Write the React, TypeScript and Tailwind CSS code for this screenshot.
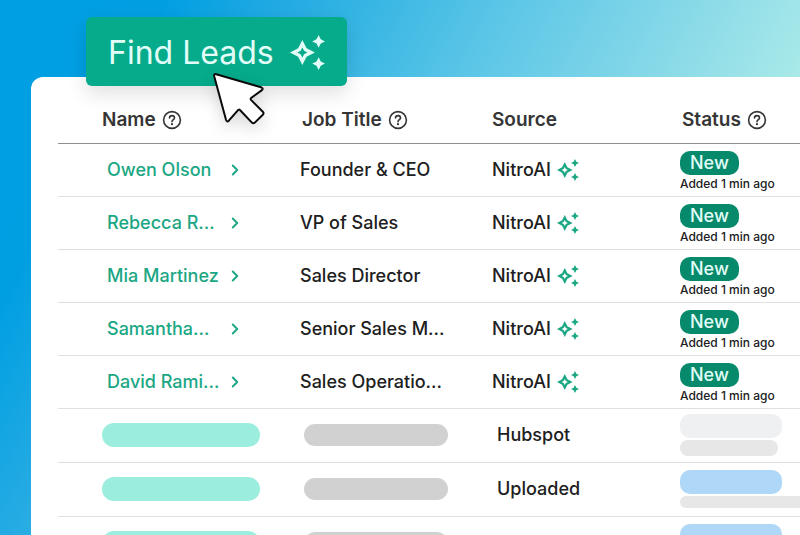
import { ChevronRight } from 'lucide-react'

interface Lead {
  name: string
  title: string
}

interface PendingLead {
  source: string
  pill: string
  note: string
}

const leads: Lead[] = [
  { name: 'Owen Olson', title: 'Founder & CEO' },
  { name: 'Rebecca R...', title: 'VP of Sales' },
  { name: 'Mia Martinez', title: 'Sales Director' },
  { name: 'Samantha...', title: 'Senior Sales M...' },
  { name: 'David Rami...', title: 'Sales Operatio...' },
]

const pending: PendingLead[] = [
  { source: 'Hubspot', pill: 'bg-[#eff0f2]', note: 'w-[98px] h-4' },
  { source: 'Uploaded', pill: 'bg-[#afd7f8]', note: 'w-full rounded-r-none h-3' },
  { source: '', pill: 'bg-[#afd7f8]', note: 'w-full rounded-r-none h-3' },
]

function Sparkles({ className }: { className: string }) {
  return (
    <svg className={className} viewBox="0 0 34 34" fill="currentColor" aria-hidden="true">
      <path
        fillRule="evenodd"
        d="M12 4.8L16.1 12.9L24.2 17L16.1 21.1L12 29.2L7.9 21.1L-0.2 17L7.9 12.9ZM12 12.2L10.3 15.3L7.2 17L10.3 18.7L12 21.8L13.7 18.7L16.8 17L13.7 15.3Z"
      />
      <path d="M27.8 0L29.9 4.1L34 6.2L29.9 8.3L27.8 12.4L25.7 8.3L21.6 6.2L25.7 4.1Z" />
      <path d="M27.8 21.6L29.9 25.7L34 27.8L29.9 29.9L27.8 34L25.7 29.9L21.6 27.8L25.7 25.7Z" />
    </svg>
  )
}

function HelpIcon() {
  return (
    <svg className="w-5 h-5" viewBox="0 0 20 20" fill="none" stroke="currentColor" strokeWidth={1.6} strokeLinecap="round" aria-hidden="true">
      <circle cx="10" cy="10" r="8.4" />
      <path d="M7.5 8C7.5 6.5 8.6 5.6 10 5.6S12.5 6.5 12.5 7.9C12.5 9.6 10 9.8 10 11.7" />
      <circle cx="10" cy="14.2" r="1.1" fill="currentColor" stroke="none" />
    </svg>
  )
}

function Heading({ label, help }: { label: string; help?: boolean }) {
  return (
    <div className="flex items-center gap-1.5 pt-px">
      {label}
      {help && <HelpIcon />}
    </div>
  )
}

export default function App() {
  return (
    <div className="h-screen overflow-hidden flex flex-col pt-[17px] font-['Inter',sans-serif] bg-[linear-gradient(118deg,#009fe3_0%,#009fe2_15%,#25abe3_27%,#33b4e3_33%,#5cc6e7_47%,#8adae8_65%,#a8e9e9_77%)]">
      <div className="relative z-10 self-start ml-[86px] -mb-[9px]">
        <button className="flex items-center gap-4 h-[69px] pt-0.5 px-[22px] rounded-md bg-[#05ab8b] text-[#e2fdf8] text-[32px] shadow-[0_8px_20px_rgba(0,0,0,0.12)]">
          Find Leads
          <Sparkles className="w-[35px] h-[35px]" />
        </button>
        <svg className="absolute left-[124px] top-[53px] w-[58px] h-[58px] drop-shadow-[0_6px_8px_rgba(0,0,0,0.15)]" viewBox="0 0 58 58" aria-hidden="true">
          <path
            d="M6.2 4.2L51 17.2Q54 18.4 51.6 20.4L41.4 27.7Q40 28.8 41.2 30.1L52.8 41.8Q54.2 43.2 52.8 44.7L44.8 52.6Q43.4 54 41.9 52.6L30.2 40.2Q29 39 27.8 40.3L18.8 50.7Q16.9 52.5 16 49.8L4.2 6.2Q3.7 3.5 6.2 4.2Z"
            fill="#fff"
            stroke="#0a0a0a"
            strokeWidth={2}
            strokeLinejoin="round"
          />
        </svg>
      </div>

      <main className="flex-1 ml-[31px] pl-[27px] pt-5 bg-white rounded-tl-xl">
        <table className="w-full table-fixed border-collapse text-left text-[#202020]">
          <colgroup>
            <col className="w-[242px]" />
            <col className="w-48" />
            <col className="w-[188px]" />
            <col />
          </colgroup>
          <thead>
            <tr className="h-[46px] border-b border-[#8f8f8f] text-[19px] text-[#353535]">
              <th className="pl-11 font-semibold"><Heading label="Name" help /></th>
              <th className="pl-0.5 font-semibold"><Heading label="Job Title" help /></th>
              <th className="font-semibold"><Heading label="Source" /></th>
              <th className="pl-0.5 font-semibold"><Heading label="Status" help /></th>
            </tr>
          </thead>
          <tbody className="text-lg font-medium">
            {leads.map((lead) => (
              <tr key={lead.name} className="h-[53px] border-b border-[#e0e0e0]">
                <td className="pl-[49px] text-[#1ba784]">
                  <a href="#" className="flex items-center">
                    <span className="w-[119px]">{lead.name}</span>
                    <ChevronRight className="w-[18px] h-[18px]" strokeWidth={2.5} />
                  </a>
                </td>
                <td>{lead.title}</td>
                <td>
                  <div className="flex items-center gap-1.5">
                    NitroAI
                    <Sparkles className="w-[22px] h-[22px] text-[#1ba784]" />
                  </div>
                </td>
                <td>
                  <div className="flex flex-col items-start pt-1 whitespace-nowrap">
                    <span className="h-6 px-2.5 rounded-[10px] bg-[#078a6b] text-[#e2fdf8] leading-6">New</span>
                    <span className="text-xs leading-[18px]">Added 1 min ago</span>
                  </div>
                </td>
              </tr>
            ))}
            {pending.map((row, i) => (
              <tr key={i} className="h-[54px] border-b border-[#e0e0e0]">
                <td className="pl-11">
                  <div className="w-[158px] h-6 rounded-full bg-[#9beedd]" />
                </td>
                <td className="pl-1">
                  <div className="w-36 h-[22px] rounded-full bg-[#d1d1d1]" />
                </td>
                <td className="pl-[5px]">{row.source}</td>
                <td>
                  <div className={`w-[102px] h-6 mb-0.5 rounded-[10px] ${row.pill}`} />
                  <div className={`rounded-lg bg-[#e7e7e7] ${row.note}`} />
                </td>
              </tr>
            ))}
          </tbody>
        </table>
      </main>
    </div>
  )
}
